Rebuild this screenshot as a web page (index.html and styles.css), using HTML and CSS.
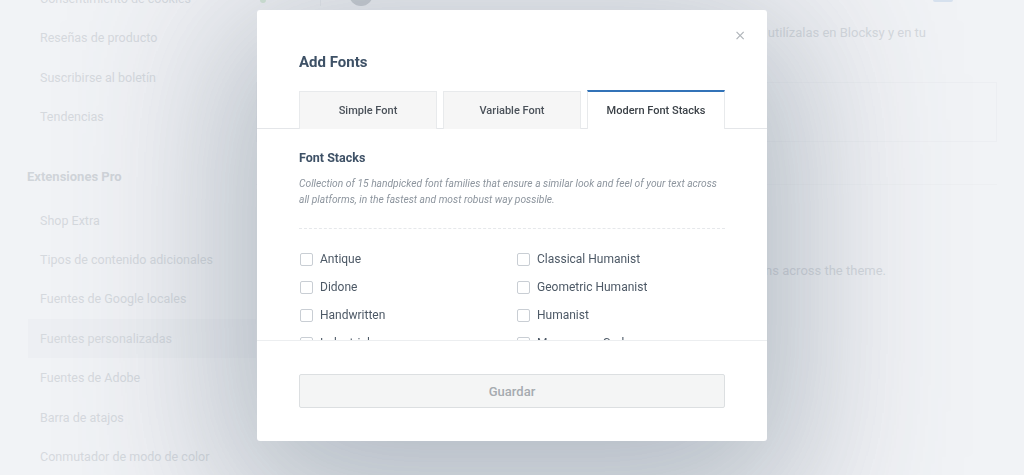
FILE: index.html
```html
<!DOCTYPE html>
<html lang="es">
<head>
    <meta charset="UTF-8" />
    <meta name="viewport" content="width=device-width, initial-scale=1.0"/>
    <title>Add Fonts</title>

    <link rel="stylesheet" href="styles.css">
</head>
<body>
    <div class="page">
        <aside class="sidebar">
            <ul class="menu">
                <li>Consentimiento de cookies</li>
                <li>Reseñas de producto</li>
                <li>Suscribirse al boletín</li>
                <li>Tendencias</li>
            </ul>
            <h3 class="menu-title">Extensiones Pro</h3>
            <ul class="menu">
                <li>Shop Extra</li>
                <li>Tipos de contenido adicionales</li>
                <li>Fuentes de Google locales</li>
                <li class="current">Fuentes personalizadas</li>
                <li>Fuentes de Adobe</li>
                <li>Barra de atajos</li>
                <li>Conmutador de modo de color</li>
            </ul>
        </aside>

        <main class="main">
            <div class="topbar">
                <span class="dot"></span>
                <span class="sep"></span>
                <span class="avatar"></span>
                <span class="spacer"></span>
                <span class="tab-mark"></span>
            </div>
            <p class="intro">Sube tus fuentes personalizadas y utilízalas en Blocksy y en tu</p>
            <div class="panel"></div>
            <div class="panel-line"></div>
            <p class="note">Use these fonts in all typography options across the theme.</p>
        </main>
    </div>

    <div class="overlay">
        <div class="modal">
            <button class="close" type="button">&times;</button>
            <h2 class="modal-title">Add Fonts</h2>

            <div class="tabs">
                <div class="tab">Simple Font</div>
                <div class="tab">Variable Font</div>
                <div class="tab active">Modern Font Stacks</div>
            </div>

            <div class="modal-body">
                <h4 class="stack-title">Font Stacks</h4>
                <p class="stack-desc">Collection of 15 handpicked font families that ensure a similar look and feel of your text across all platforms, in the fastest and most robust way possible.</p>

                <div class="stack-list">
                    <label class="check"><span class="box"></span>Antique</label>
                    <label class="check"><span class="box"></span>Classical Humanist</label>
                    <label class="check"><span class="box"></span>Didone</label>
                    <label class="check"><span class="box"></span>Geometric Humanist</label>
                    <label class="check"><span class="box"></span>Handwritten</label>
                    <label class="check"><span class="box"></span>Humanist</label>
                    <label class="check"><span class="box"></span>Industrial</label>
                    <label class="check"><span class="box"></span>Monospace Code</label>
                </div>
            </div>

            <div class="modal-footer">
                <button class="save" type="button">Guardar</button>
            </div>
        </div>
    </div>
</body>
</html>
```

FILE: styles.css
```css
* {
    box-sizing: border-box;
}

body {
    margin: 0;
    font-family: Roboto, "Liberation Sans", sans-serif;
    background: #f7f8fa;
    height: 475px;
    overflow: hidden;
}

.page {
    display: flex;
    height: 475px;
}

/* faded admin page behind the modal */
.sidebar {
    width: 256px;
    flex-shrink: 0;
    margin-top: -21px;
}

.menu {
    list-style: none;
    margin: 0;
    padding: 0 0 0 28px;
}

.menu li {
    line-height: 39.4px;
    padding-left: 12px;
    font-size: 12.5px;
    color: #b9bfc6;
}

.menu li.current {
    background: #eef0f3;
}

.menu-title {
    margin: 20px 0 4px 27px;
    line-height: 40px;
    font-size: 13px;
    font-weight: 700;
    color: #aeb5bc;
}

.main {
    flex: 1;
    padding-right: 27px;
}

.topbar {
    display: flex;
    align-items: flex-end;
    height: 6px;
}

.dot {
    width: 6px;
    height: 6px;
    border-radius: 50%;
    background: #b7dcb9;
    margin-left: 4px;
    margin-bottom: 3px;
}

.sep {
    width: 1px;
    height: 20px;
    background: #e1e4e8;
    margin-left: 54px;
}

.avatar {
    width: 24px;
    height: 24px;
    border-radius: 50%;
    background: #a3a9b0;
    margin-left: 28px;
}

.spacer {
    flex: 1;
}

.tab-mark {
    width: 20px;
    height: 6px;
    border-radius: 2px;
    background: #bcd2ea;
    margin-right: 44px;
    margin-bottom: 4px;
}

.intro {
    margin: 17px 0 0;
    font-size: 13px;
    line-height: 20px;
    color: #b8bec5;
    text-align: right;
    padding-right: 71px;
}

.panel {
    height: 60px;
    margin-top: 39px;
    border: 1px solid #eceef1;
}

.panel-line {
    height: 1px;
    margin-top: 42px;
    background: #eef0f2;
}

.note {
    margin: 78px 0 0;
    font-size: 13px;
    color: #b8bec5;
    text-align: right;
    padding-right: 111px;
}

/* overlay + modal */
.overlay {
    position: fixed;
    inset: 0;
    background: rgba(236, 239, 242, 0.55);
    display: flex;
    justify-content: center;
    align-items: flex-start;
    padding-top: 10px;
}

.modal {
    position: relative;
    width: 510px;
    background: #fff;
    border-radius: 3px;
    box-shadow: 0 40px 160px 30px rgba(70, 90, 110, 0.38);
}

.close {
    position: absolute;
    top: 18px;
    right: 21px;
    border: none;
    background: none;
    font-size: 14px;
    color: #b0b5ba;
    padding: 0;
    line-height: 1;
    font-family: "DejaVu Sans", sans-serif;
}

.modal-title {
    margin: 0;
    padding: 42px 42px 0;
    font-size: 15px;
    font-weight: 700;
    color: #3e5166;
    line-height: 21px;
}

.tabs {
    display: flex;
    gap: 6px;
    margin-top: 18px;
    padding: 0 42px;
    border-bottom: 1px solid #e4e6e9;
}

.tab {
    flex: 1;
    height: 38px;
    display: flex;
    align-items: center;
    justify-content: center;
    font-size: 11px;
    font-weight: 500;
    color: #4b525a;
    background: #f6f6f6;
    border: 1px solid #e8eaec;
    border-bottom: none;
    margin-bottom: -1px;
}

.tab.active {
    background: #fff;
    border-top: 2px solid #3273b8;
    color: #3c4248;
    height: 39px;
    margin-top: -1px;
}

.modal-body {
    height: 212px;
    overflow: hidden;
    padding: 21px 42px 0;
    border-bottom: 1px solid #eceef0;
}

.stack-title {
    margin: 0;
    font-size: 12.5px;
    font-weight: 700;
    color: #3e5166;
    line-height: 16px;
}

.stack-desc {
    margin: 10px 0 0;
    font-size: 10.25px;
    font-style: italic;
    line-height: 16px;
    color: #8d959e;
    padding-bottom: 20px;
    border-bottom: 1px dashed #e6e8eb;
}

.stack-list {
    display: grid;
    grid-template-columns: 217px 1fr;
    row-gap: 8px;
    padding-top: 20px;
}

.check {
    display: flex;
    align-items: center;
    gap: 7px;
    height: 20px;
    font-size: 12px;
    color: #4d5966;
}

.box {
    width: 13px;
    height: 13px;
    border: 1px solid #c9ced4;
    border-radius: 2px;
    margin-left: 1px;
}

.modal-footer {
    padding: 33px 42px 33px;
}

.save {
    width: 100%;
    height: 34px;
    border: 1px solid #dcdfe1;
    border-radius: 2px;
    background: #f4f5f5;
    font-family: Roboto, "Liberation Sans", sans-serif;
    font-size: 13px;
    font-weight: 500;
    color: #a6abb0;
}
```
